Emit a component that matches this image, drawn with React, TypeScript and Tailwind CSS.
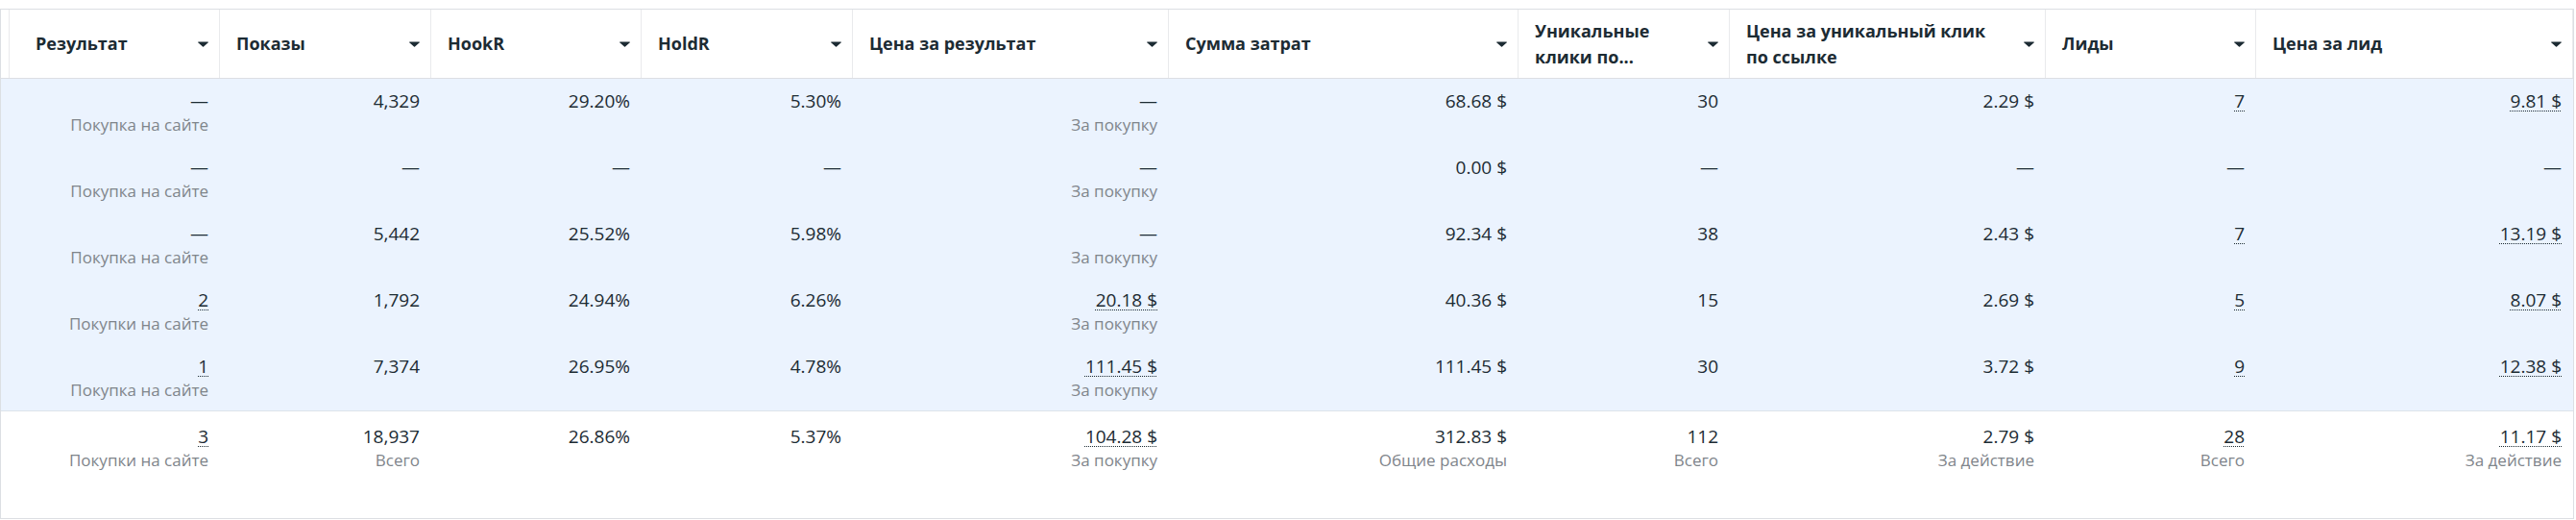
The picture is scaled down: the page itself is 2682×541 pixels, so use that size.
type Cell = { v: string; sub?: string; dot?: boolean };

const columns = [
  { title: ["Результат"], w: "w-[228px]", pl: "pl-[36px]" },
  { title: ["Показы"], w: "w-[220px]", pl: "pl-[17px]" },
  { title: ["HookR"], w: "w-[219px]", pl: "pl-[17px]" },
  { title: ["HoldR"], w: "w-[220px]", pl: "pl-[17px]" },
  { title: ["Цена за результат"], w: "w-[329px]", pl: "pl-[17px]" },
  { title: ["Сумма затрат"], w: "w-[364px]", pl: "pl-[17px]" },
  { title: ["Уникальные", "клики по..."], w: "w-[220px]", pl: "pl-[17px]" },
  { title: ["Цена за уникальный клик", "по ссылке"], w: "w-[329px]", pl: "pl-[17px]" },
  { title: ["Лиды"], w: "w-[219px]", pl: "pl-[17px]" },
  { title: ["Цена за лид"], w: "w-[330px]", pl: "pl-[17px]" },
];

const rows: Cell[][] = [
  [
    { v: "—", sub: "Покупка на сайте" },
    { v: "4,329" },
    { v: "29.20%" },
    { v: "5.30%" },
    { v: "—", sub: "За покупку" },
    { v: "68.68 $" },
    { v: "30" },
    { v: "2.29 $" },
    { v: "7", dot: true },
    { v: "9.81 $", dot: true },
  ],
  [
    { v: "—", sub: "Покупка на сайте" },
    { v: "—" },
    { v: "—" },
    { v: "—" },
    { v: "—", sub: "За покупку" },
    { v: "0.00 $" },
    { v: "—" },
    { v: "—" },
    { v: "—" },
    { v: "—" },
  ],
  [
    { v: "—", sub: "Покупка на сайте" },
    { v: "5,442" },
    { v: "25.52%" },
    { v: "5.98%" },
    { v: "—", sub: "За покупку" },
    { v: "92.34 $" },
    { v: "38" },
    { v: "2.43 $" },
    { v: "7", dot: true },
    { v: "13.19 $", dot: true },
  ],
  [
    { v: "2", sub: "Покупки на сайте", dot: true },
    { v: "1,792" },
    { v: "24.94%" },
    { v: "6.26%" },
    { v: "20.18 $", sub: "За покупку", dot: true },
    { v: "40.36 $" },
    { v: "15" },
    { v: "2.69 $" },
    { v: "5", dot: true },
    { v: "8.07 $", dot: true },
  ],
  [
    { v: "1", sub: "Покупка на сайте", dot: true },
    { v: "7,374" },
    { v: "26.95%" },
    { v: "4.78%" },
    { v: "111.45 $", sub: "За покупку", dot: true },
    { v: "111.45 $" },
    { v: "30" },
    { v: "3.72 $" },
    { v: "9", dot: true },
    { v: "12.38 $", dot: true },
  ],
];

const totals: Cell[] = [
  { v: "3", sub: "Покупки на сайте", dot: true },
  { v: "18,937", sub: "Всего" },
  { v: "26.86%" },
  { v: "5.37%" },
  { v: "104.28 $", sub: "За покупку", dot: true },
  { v: "312.83 $", sub: "Общие расходы" },
  { v: "112", sub: "Всего" },
  { v: "2.79 $", sub: "За действие" },
  { v: "28", sub: "Всего", dot: true },
  { v: "11.17 $", sub: "За действие", dot: true },
];

const SortArrow = () => (
  <svg width="11" height="6" viewBox="0 0 11 6" className="shrink-0">
    <path d="M0.6 0.4h9.8c0.5 0 0.7 0.5 0.4 0.9L6 5.6c-0.3 0.3-0.7 0.3-1 0L0.2 1.3C-0.1 0.9 0.1 0.4 0.6 0.4z" fill="#1c2b33" />
  </svg>
);

const DataCell = ({ cell, w }: { cell: Cell; w: string }) => (
  <div className={`${w} flex shrink-0 flex-col items-end pr-[12px]`}>
    <span
      className={`text-[19px] leading-[24px] text-[#1c2b33] ${
        cell.dot ? "underline decoration-dotted decoration-[#1c2b33] decoration-1 underline-offset-[3px]" : ""
      }`}
    >
      {cell.v}
    </span>
    {cell.sub && <span className="mt-[1px] text-[17px] leading-[24px] text-[#7f858b]">{cell.sub}</span>}
  </div>
);

export default function App() {
  return (
    <div className="h-[541px] w-[2682px] bg-white pt-[9px] font-['Open_Sans','Noto_Sans',sans-serif]">
      <div className="w-[2680px] border border-[#dcdfe3]">
        {/* шапка */}
        <div className="flex h-[72px] border-b border-[#dcdfe3] bg-white">
          {columns.map((c, i) => (
            <div
              key={i}
              className={`${c.w} relative flex shrink-0 items-center justify-between gap-2 border-r border-[#e9eaec] ${c.pl} pr-[11px]`}
            >
              {i === 0 && <div className="absolute top-0 left-[8px] h-full w-px bg-[#e9eaec]" />}
              <div className="text-[18px] leading-[27px] font-bold text-[#1c2b33]">
                {c.title.map((t) => (
                  <div key={t}>{t}</div>
                ))}
              </div>
              <SortArrow />
            </div>
          ))}
        </div>

        {/* строки */}
        <div className="bg-[#ebf3fe]">
          {rows.map((r, i) => (
            <div key={i} className="flex h-[69px] pt-[11px]">
              {r.map((cell, j) => (
                <DataCell key={j} cell={cell} w={columns[j].w} />
              ))}
            </div>
          ))}
        </div>

        {/* итого */}
        <div className="flex h-[112px] border-t border-[#dde3ea] pt-[14px]">
          {totals.map((cell, j) => (
            <DataCell key={j} cell={cell} w={columns[j].w} />
          ))}
        </div>
      </div>
    </div>
  );
}
